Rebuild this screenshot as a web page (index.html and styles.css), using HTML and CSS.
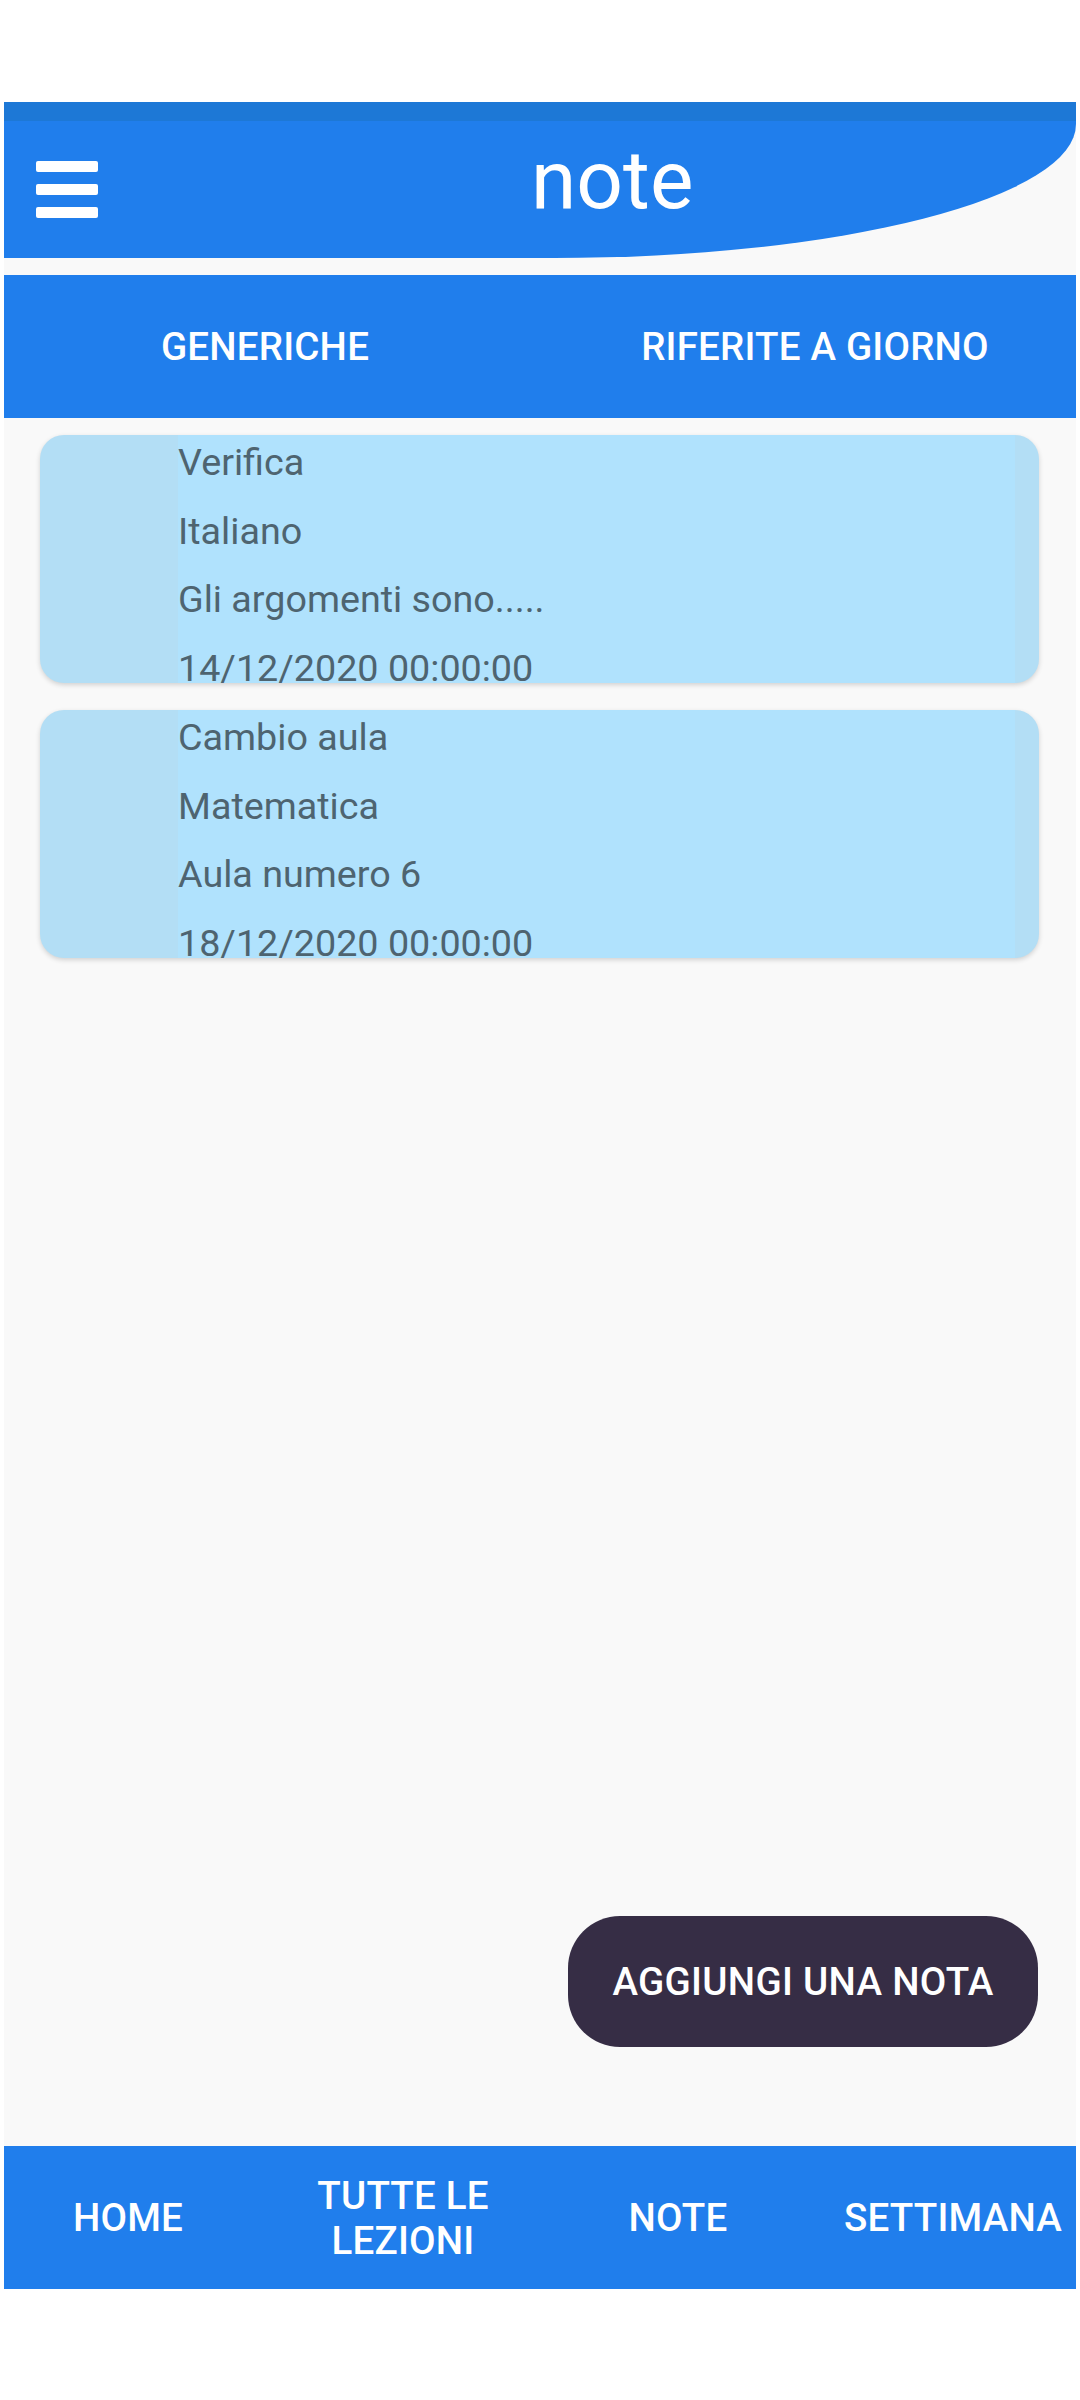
FILE: index.html
```html
<!DOCTYPE html>
<html lang="it">
<head>
<meta charset="utf-8">
<title>note</title>
<link rel="stylesheet" href="styles.css">
</head>
<body>
<div class="app">
  <div class="statusband"></div>
  <header class="header">
    <div class="hamburger"><span></span><span></span><span></span></div>
    <h1 class="title">note</h1>
  </header>
  <nav class="toptabs">
    <div class="toptab t1">GENERICHE</div>
    <div class="toptab t2">RIFERITE A GIORNO</div>
  </nav>
  <main class="content">
    <div class="card">
      <div class="card-left"></div>
      <div class="card-body">
        <div class="line">Verifica</div>
        <div class="line">Italiano</div>
        <div class="line">Gli argomenti sono.....</div>
        <div class="line">14/12/2020 00:00:00</div>
      </div>
      <div class="card-right"></div>
    </div>
    <div class="card">
      <div class="card-left"></div>
      <div class="card-body">
        <div class="line">Cambio aula</div>
        <div class="line">Matematica</div>
        <div class="line">Aula numero 6</div>
        <div class="line">18/12/2020 00:00:00</div>
      </div>
      <div class="card-right"></div>
    </div>
    <button class="fab">AGGIUNGI UNA NOTA</button>
  </main>
  <nav class="bottomnav">
    <div class="navtabs">
      <div class="navtab">HOME</div>
      <div class="navtab">TUTTE LE LEZIONI</div>
      <div class="navtab">NOTE</div>
      <div class="navtab">SETTIMANA</div>
    </div>
  </nav>
</div>
</body>
</html>
```
FILE: styles.css
```css
* { box-sizing: border-box; }
html, body {
  margin: 0;
  padding: 0;
  background: #ffffff;
  width: 1080px;
  height: 2400px;
  overflow: hidden;
}
body {
  font-family: Roboto, "Liberation Sans", sans-serif;
}
.app {
  margin: 102px 4px 0 4px;
  width: 1072px;
  height: 2187px;
  background: #f9f9f9;
  display: flex;
  flex-direction: column;
}
.statusband {
  height: 19px;
  background: #1d78d6;
  flex: none;
}
.header {
  height: 137px;
  flex: none;
  background: #207eec;
  border-bottom-right-radius: 522px 134px;
  display: flex;
  align-items: center;
}
.hamburger {
  margin-left: 32px;
  width: 62px;
  height: 57px;
  display: flex;
  flex-direction: column;
  justify-content: space-between;
}
.hamburger span {
  display: block;
  height: 11px;
  background: #ffffff;
  border-radius: 2px;
}
.title {
  margin: 18px 0 0 433px;
  align-self: flex-start;
  font-weight: 400;
  font-size: 82px;
  line-height: 82px;
  color: #ffffff;
}
.toptabs {
  margin-top: 17px;
  height: 143px;
  flex: none;
  background: #207eec;
  display: flex;
  overflow: hidden;
}
.toptab {
  display: flex;
  align-items: center;
  justify-content: center;
  color: #ffffff;
  font-weight: 500;
  font-size: 38.5px;
  letter-spacing: 0.2px;
  flex: none;
}
.t1 { width: 522px; }
.t2 { width: 578px; }
.content {
  flex: 1;
  position: relative;
  padding: 17px 37px 0 36px;
  display: flex;
  flex-direction: column;
  gap: 27px;
}
.card {
  height: 248px;
  border-radius: 24px;
  background: #b3def5;
  display: flex;
  overflow: hidden;
  box-shadow: 0 2px 5px rgba(0, 0, 0, 0.16);
}
.card-left { width: 138px; flex: none; }
.card-right { width: 24px; flex: none; }
.card-body {
  flex: 1;
  background: #b0e2fd;
  overflow: hidden;
}
.line {
  margin-top: -7px;
  margin-bottom: 7px;
  font-size: 37.7px;
  line-height: 68.5px;
  color: #4e6470;
  white-space: nowrap;
}
.fab {
  position: absolute;
  right: 38px;
  bottom: 99px;
  width: 470px;
  height: 131px;
  border: none;
  border-radius: 52px;
  background: #362d45;
  color: #ffffff;
  font-family: Roboto, "Liberation Sans", sans-serif;
  font-weight: 500;
  font-size: 38.5px;
  letter-spacing: 0.3px;
  padding: 0;
}
.bottomnav {
  height: 143px;
  flex: none;
  background: #207eec;
  overflow: hidden;
}
.navtabs {
  display: flex;
  height: 100%;
  margin-left: -13.5px;
}
.navtab {
  flex: none;
  width: 275px;
  padding: 0 24px;
  display: flex;
  align-items: center;
  justify-content: center;
  text-align: center;
  color: #ffffff;
  font-weight: 500;
  font-size: 38.5px;
  line-height: 45px;
  letter-spacing: 0.2px;
}
```
